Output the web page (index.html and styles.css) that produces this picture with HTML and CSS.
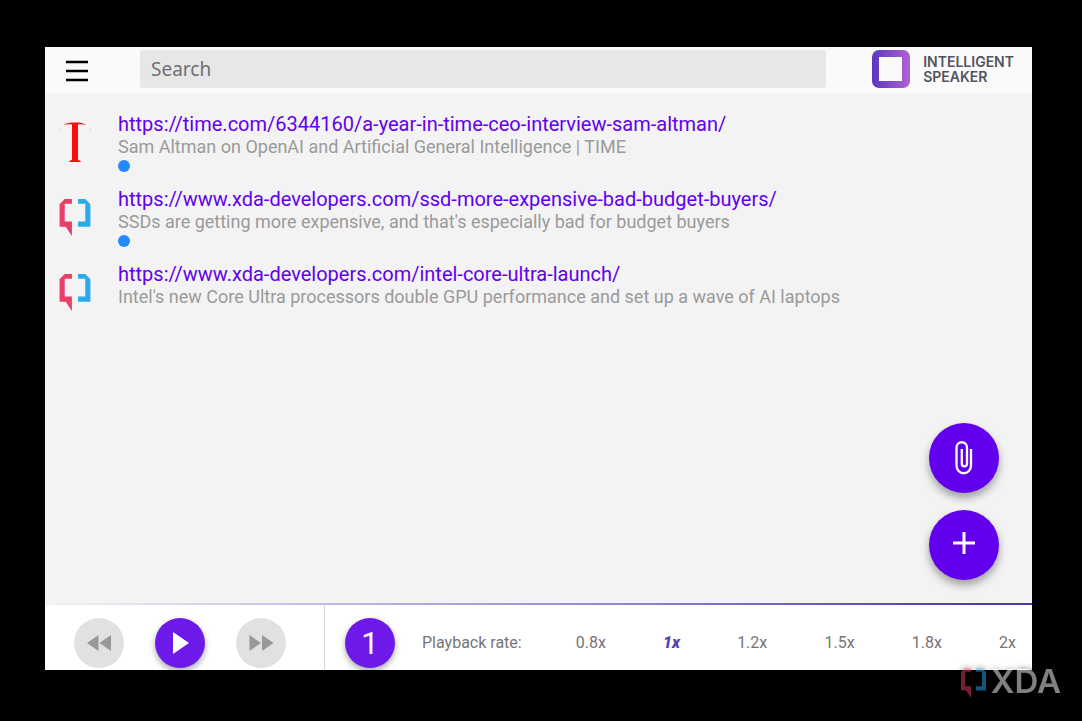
FILE: index.html
```html
<!DOCTYPE html>
<html lang="en">
<head>
<meta charset="utf-8">
<title>Intelligent Speaker</title>
<link rel="stylesheet" href="styles.css">
</head>
<body>
<svg class="defs" aria-hidden="true">
  <symbol id="xda-mark" viewBox="0 0 30 36">
    <path fill="#ea3e67" d="M12 0v4.500H5V22h7v14L6 27H0V5l5-5z"/>
    <path fill="#2aaaeb" d="M18 0h7l5 5v22H18v-5h7V4.500h-7z"/>
  </symbol>
</svg>
<div class="app">
  <header class="topbar">
    <button class="menu" aria-label="Menu"><svg width="24" height="22" viewBox="0 0 24 22"><path d="M1 2h22M1 11h22M1 20h22" stroke="#000" stroke-width="2.6"/></svg></button>
    <input class="search" type="search" placeholder="Search" aria-label="Search">
    <div class="brand">
      <svg width="38" height="38" viewBox="0 0 38 38">
        <defs><linearGradient id="g" x1="0" x2="1"><stop offset="0" stop-color="#5b38bd"/><stop offset="1" stop-color="#b160d4"/></linearGradient></defs>
        <rect width="38" height="38" rx="7" fill="url(#g)"/>
        <rect x="7" y="7" width="23" height="24" fill="#fafafa"/>
      </svg>
      <span class="brand-name">INTELLIGENT<br>SPEAKER</span>
    </div>
  </header>
  <main class="content">
    <ul class="list">
      <li class="item">
        <svg class="favicon" viewBox="0 0 34 46">
          <path fill="#fb0d0f" d="M5 6Q8 3.500 12 3.500h8q4 0 7 2.500-4-1.300-8-.5V41q2.500 0 3 2H10q.5-2 3-2V5.500Q9 4.700 5 6z"/>
          <path d="M0 11l1-1M31 10l1 1" stroke="#f3a0a0"/>
        </svg>
        <div class="info">
          <a href="#time">https://time.com/6344160/a-year-in-time-ceo-interview-sam-altman/</a>
          <p>Sam Altman on OpenAI and Artificial General Intelligence | TIME</p>
          <span class="dot"></span>
        </div>
      </li>
      <li class="item">
        <svg class="favicon mark"><use href="#xda-mark"/></svg>
        <div class="info">
          <a href="#ssd">https://www.xda-developers.com/ssd-more-expensive-bad-budget-buyers/</a>
          <p>SSDs are getting more expensive, and that's especially bad for budget buyers</p>
          <span class="dot"></span>
        </div>
      </li>
      <li class="item">
        <svg class="favicon mark"><use href="#xda-mark"/></svg>
        <div class="info">
          <a href="#intel">https://www.xda-developers.com/intel-core-ultra-launch/</a>
          <p>Intel's new Core Ultra processors double GPU performance and set up a wave of AI laptops</p>
        </div>
      </li>
    </ul>
    <div class="fabs">
      <button class="fab" aria-label="Attach file"><svg width="18" height="34" viewBox="0 0 18 34"><path d="M16 8v16.500a7 7.500 0 0 1-14.500 0V6.500a5 5 0 0 1 10.500 0v16.200a2.600 2.600 0 0 1-5.200 0V8" fill="none" stroke="#fff" stroke-width="2.300"/></svg></button>
      <button class="fab plus" aria-label="Add"><svg width="22" height="22" viewBox="0 0 22 22"><path d="M11 0v22M0 11h22" stroke="#fff" stroke-width="3"/></svg></button>
    </div>
  </main>
  <footer class="player">
    <div class="transport">
      <button class="round" aria-label="Rewind"><svg width="26" height="16" viewBox="0 0 26 16"><path d="M12.500 0v16L1 8zM25 0v16L13.500 8z" fill="#999"/></svg></button>
      <button class="round active" aria-label="Play"><svg width="18" height="22" viewBox="0 0 18 22"><path d="M2 0v22l16-11z" fill="#fff"/></svg></button>
      <button class="round" aria-label="Fast forward"><svg width="26" height="16" viewBox="0 0 26 16"><path d="M1.500 0v16L13 8zM14 0v16l11.500-8z" fill="#999"/></svg></button>
    </div>
    <button class="round active count">1</button>
    <span class="rate-label" id="rate">Playback rate:</span>
    <div class="rates" role="group" aria-labelledby="rate">
      <button>0.8x</button><button class="current" aria-pressed="true">1x</button><button>1.2x</button><button>1.5x</button><button>1.8x</button><button>2x</button>
    </div>
  </footer>
</div>
<div class="watermark"><svg><use href="#xda-mark"/></svg><span>XDA</span></div>
</body>
</html>
```
FILE: styles.css
```css
* { box-sizing: border-box; }
body {
  margin: 0;
  min-height: 100vh;
  padding: 47px 50px 51px 45px;
  display: flex;
  background: #000;
  font-family: Roboto, sans-serif;
}
button { border: 0; padding: 0; background: none; font: inherit; color: inherit; cursor: pointer; }
svg { display: block; }
.defs { position: absolute; width: 0; height: 0; }
.app { flex: 1; min-width: 0; display: flex; flex-direction: column; background: #f3f3f3; overflow: hidden; }
.topbar { display: flex; align-items: center; height: 47px; padding: 0 18px 3px 20px; background: #fafafa; }
.menu { margin: 3px 51px 0 0; }
.search {
  flex: 1;
  min-width: 0;
  height: 38px;
  margin-right: 46px;
  padding: 0 11px;
  border: 0;
  border-radius: 3px;
  background: #e7e7e7;
  font: 19px "Noto Sans", sans-serif;
}
.search::placeholder { color: #707070; opacity: 1; }
.brand { display: flex; align-items: center; gap: 13px; }
.brand-name { color: #53535f; font: 600 14px/15px Inter, sans-serif; }
.content { position: relative; flex: 1; padding: 18px 14px; }
.list { margin: 0; padding: 0; list-style: none; }
.item { display: flex; gap: 25px; height: 75px; }
.favicon { flex: none; width: 34px; height: 46px; margin-top: 7px; }
.mark { height: 38px; margin-top: 11px; padding-top: 1px; width: 32px; margin-right: 2px; }
.info { min-width: 0; }
.info a { display: block; color: #6200ee; font-size: 20px; line-height: 24px; text-decoration: none; }
.info p { margin: 0; color: #9a9a9a; font-size: 18px; line-height: 22px; }
.dot { display: block; width: 12px; height: 12px; margin-top: 2px; border-radius: 50%; background: #2488ff; }
.fabs { position: absolute; right: 33px; bottom: 23px; display: grid; gap: 17px; }
.fab { display: grid; place-items: center; width: 70px; height: 70px; border-radius: 50%; background: #6200ee; box-shadow: 0 5px 8px rgba(0, 0, 0, .35); }
.plus { padding-bottom: 4px; }
.player {
  display: flex;
  align-items: center;
  height: 67px;
  padding-right: 16px;
  border-top: 2px solid;
  border-image: linear-gradient(90deg, #f3f3f3, #bdb3df 32%, #8e82d0 60%, #5944b8 88%, #4a35a9) 1;
  background: #fff;
}
.transport { display: flex; align-self: stretch; align-items: center; gap: 31px; padding: 11px 38px 0 29px; border-right: 1px solid #d3d3d3; }
.round { display: grid; place-items: center; flex: none; width: 50px; height: 50px; border-radius: 50%; background: #e1e1e1; }
.active { background: #6d19ea; color: #fff; box-shadow: 0 3px 6px rgba(0, 0, 0, .35); }
.count { margin: 11px 27px 0 20px; font-size: 31px; }
.rate-label, .rates { margin-top: 10px; color: #757575; font-size: 16px; line-height: 20px; white-space: nowrap; }
.rates { flex: 1; display: flex; justify-content: space-between; margin-left: 54px; }
.current { color: #5840b8; font-weight: 900; font-style: italic; }
.watermark {
  position: absolute;
  right: 21px;
  bottom: 18px;
  display: flex;
  align-items: center;
  gap: 5px;
  opacity: .5;
  color: #fff;
  font: 600 33px/44px Inter, sans-serif;
  filter: drop-shadow(0 0 3px #000);
}
.watermark svg { width: 25px; height: 30px; margin-top: 4px; }
```
